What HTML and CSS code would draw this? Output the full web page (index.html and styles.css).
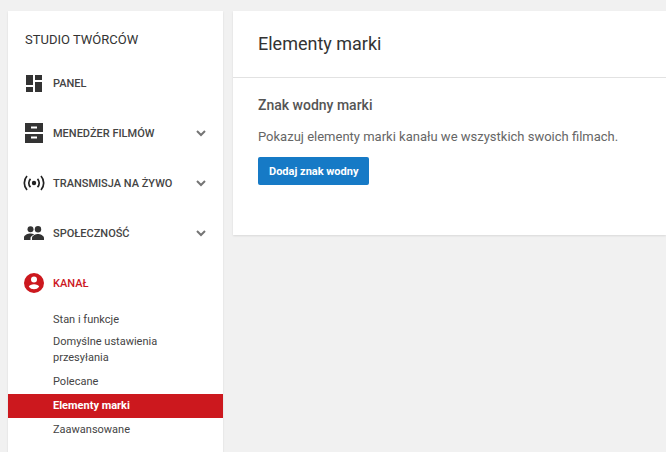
FILE: index.html
```html
<!DOCTYPE html>
<html lang="pl">
<head>
    <meta charset="UTF-8">
    <title>Elementy marki - Studio twórców</title>
    <link rel="stylesheet" href="styles.css">
</head>
<body>
    <div class="layout">
        <nav class="sidebar">
            <div class="sidebar-title">STUDIO TWÓRCÓW</div>

            <a class="nav-item">
                <span class="nav-icon">
                    <svg width="16" height="17" viewBox="0 0 16 17"><path fill="#333" d="M0 0h7v10H0zM9 0h7v5H9zM9 7h7v10H9zM0 12h7v5H0z"/></svg>
                </span>
                <span class="nav-label">PANEL</span>
            </a>
            <a class="nav-item">
                <span class="nav-icon">
                    <svg width="18" height="20" viewBox="0 0 18 20"><path fill="#333" fill-rule="evenodd" d="M0 0h18v9H0zM6 3.500v2h6v-2zM0 11h18v9H0zM6 13.500v2h6v-2z"/></svg>
                </span>
                <span class="nav-label">MENEDŻER FILMÓW</span>
                <svg class="chevron" width="10" height="7" viewBox="0 0 10 7"><path d="M1 1l4 4 4-4" fill="none" stroke="#757575" stroke-width="2"/></svg>
            </a>
            <a class="nav-item">
                <span class="nav-icon">
                    <svg width="22" height="16" viewBox="0 0 22 16"><circle cx="11" cy="8" r="2.200" fill="#222"/><path d="M7.500 3.800a6 6 0 0 0 0 8.400M14.500 3.800a6 6 0 0 1 0 8.400M4 1a10.500 10.500 0 0 0 0 14M18 1a10.500 10.500 0 0 1 0 14" fill="none" stroke="#222" stroke-width="1.700"/></svg>
                </span>
                <span class="nav-label">TRANSMISJA NA ŻYWO</span>
                <svg class="chevron" width="10" height="7" viewBox="0 0 10 7"><path d="M1 1l4 4 4-4" fill="none" stroke="#757575" stroke-width="2"/></svg>
            </a>
            <a class="nav-item">
                <span class="nav-icon">
                    <svg width="20" height="14" viewBox="0 0 20 14"><circle cx="6.500" cy="3.200" r="3" fill="#333"/><circle cx="14" cy="3.200" r="3.200" fill="#333"/><path fill="#333" d="M0 14v-2.500C0 9 4 7.500 6.500 7.500c1.200 0 2.600.3 3.800.9C8 9.400 6.500 10.600 6.500 12v2zM8 14v-2c0-2.500 4-4 6-4s6 1.500 6 4v2z"/></svg>
                </span>
                <span class="nav-label">SPOŁECZNOŚĆ</span>
                <svg class="chevron" width="10" height="7" viewBox="0 0 10 7"><path d="M1 1l4 4 4-4" fill="none" stroke="#757575" stroke-width="2"/></svg>
            </a>
            <a class="nav-item active">
                <span class="nav-icon">
                    <svg width="20" height="20" viewBox="0 0 20 20"><path fill="#cc181e" fill-rule="evenodd" d="M10 0a10 10 0 1 1 0 20a10 10 0 0 1 0-20zM10 3.500a3 3 0 1 0 0 6a3 3 0 0 0 0-6zM10 11.300c-2.400 0-5 1-5.200 2.500a6.600 6.600 0 0 0 10.400 0c-.2-1.500-2.800-2.500-5.200-2.500z"/></svg>
                </span>
                <span class="nav-label">KANAŁ</span>
            </a>

            <ul class="subnav">
                <li>Stan i funkcje</li>
                <li class="wrapped">Domyślne ustawienia przesyłania</li>
                <li>Polecane</li>
                <li class="current">Elementy marki</li>
                <li>Zaawansowane</li>
            </ul>
        </nav>

        <main class="card">
            <h1 class="card-title">Elementy marki</h1>
            <section class="card-body">
                <h2>Znak wodny marki</h2>
                <p>Pokazuj elementy marki kanału we wszystkich swoich filmach.</p>
                <button class="btn-primary">Dodaj znak wodny</button>
            </section>
        </main>
    </div>
</body>
</html>
```

FILE: styles.css
```css
html, body {
    height: 100%;
    overflow: hidden;
}
body {
    margin: 0;
    background: #f1f1f1;
    font-family: Roboto, "Liberation Sans", sans-serif;
    color: #333;
}
.layout {
    display: flex;
    align-items: flex-start;
    gap: 10px;
    padding: 11px 0 0 8px;
}
.sidebar {
    flex: 0 0 215px;
    height: 460px;
    background: white;
    box-shadow: 0 1px 2px rgba(0,0,0,0.1);
}
.sidebar-title {
    padding: 22px 0 0 17px;
    height: 25px;
    line-height: 14px;
    font-size: 13px;
    font-weight: 400;
}
.nav-item {
    display: flex;
    align-items: center;
    height: 50px;
    font-size: 11px;
    font-weight: 500;
    color: #444;
}
.nav-icon {
    flex: 0 0 45px;
    display: flex;
    justify-content: center;
    box-sizing: border-box;
    padding-left: 7px;
}
.nav-label {
    flex: 1;
}
.chevron {
    margin-right: 17px;
}
.active {
    color: #cc181e;
}
.subnav {
    list-style: none;
    margin: 0;
    padding: 0;
    font-size: 11px;
    line-height: 16px;
    color: #444;
}
.subnav li {
    padding: 4px 40px 4px 45px;
}
.subnav .wrapped {
    padding-top: 2px;
}
.subnav .current {
    background: #cc181e;
    color: white;
    font-weight: 700;
}
.card {
    flex: 1;
    height: 224px;
    background: white;
    box-shadow: 0 1px 2px rgba(0,0,0,0.1);
}
.card-title {
    margin: 0;
    padding: 0 25px;
    height: 66px;
    line-height: 65px;
    font-size: 18px;
    font-weight: 400;
    color: #333;
    border-bottom: 1px solid #e2e2e2;
}
.card-body {
    padding: 0 25px;
}
.card-body h2 {
    margin: 0;
    padding-top: 19px;
    font-size: 14px;
    line-height: 16px;
    font-weight: 500;
    color: #555;
}
.card-body p {
    margin: 0;
    padding-top: 16px;
    font-size: 13px;
    line-height: 16px;
    color: #666;
}
.btn-primary {
    display: block;
    margin-top: 12px;
    height: 28px;
    padding: 0 11px;
    border: none;
    border-radius: 2px;
    background: #167ac6;
    color: white;
    font-family: inherit;
    font-size: 11px;
    font-weight: 700;
}
```
